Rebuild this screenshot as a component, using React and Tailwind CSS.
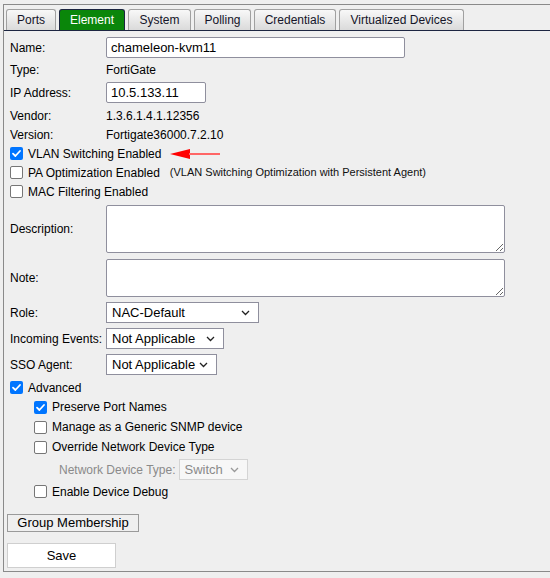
import React from "react";

const tabs = [
  { name: "Ports", w: "w-[50px]" },
  { name: "Element", w: "w-[66px]", active: true },
  { name: "System", w: "w-[63px]" },
  { name: "Polling", w: "w-[57px]" },
  { name: "Credentials", w: "w-[82px]" },
  { name: "Virtualized Devices", w: "w-[125px]" },
];

function Check({ checked }) {
  if (checked) {
    return (
      <span className="w-[13px] h-[13px] rounded-[2px] bg-[#0075ff] flex items-center justify-center shrink-0">
        <svg width="11" height="11" viewBox="0 0 11 11" fill="none">
          <path d="M2 5.6 L4.4 8 L9 3" stroke="white" strokeWidth="1.8" strokeLinecap="round" strokeLinejoin="round" />
        </svg>
      </span>
    );
  }
  return <span className="w-[13px] h-[13px] rounded-[2px] bg-white border border-[#767676] shrink-0" />;
}

function CheckRow({ checked, label, indent, h = "h-[19px]", children }) {
  return (
    <div className={`flex items-center ${h} ${indent ? "pl-[24px]" : ""}`}>
      <Check checked={checked} />
      <span className="ml-[5px]">{label}</span>
      {children}
    </div>
  );
}

function Chevron({ color = "#222" }) {
  return (
    <svg width="9" height="6" viewBox="0 0 9 6" fill="none">
      <path d="M1 1 L4.5 4.5 L8 1" stroke={color} strokeWidth="1.3" />
    </svg>
  );
}

function Select({ value, w, disabled }) {
  return (
    <div
      className={`${w} h-[21px] flex items-center justify-between pl-[5px] pr-[8px] text-[13px] border ${
        disabled ? "border-[#d4d4d4] text-[#8a8a8a] bg-[#f7f7f7] h-[20px]" : "border-[#8f8f9d] bg-white text-black"
      }`}
    >
      <span>{value}</span>
      <Chevron color={disabled ? "#999" : "#222"} />
    </div>
  );
}

function Field({ label, children, h = "h-[22px]", className = "" }) {
  return (
    <div className={`flex items-center ${h} ${className}`}>
      <span className="w-[96px] shrink-0">{label}</span>
      {children}
    </div>
  );
}

export default function App() {
  return (
    <div className="h-[578px] bg-[#efefef] pt-[4px] pl-[3px] overflow-hidden text-[12px] text-black" style={{ fontFamily: '"Liberation Sans", Arial, sans-serif' }}>
      <div className="h-[568px] border-t border-l border-b border-[#8a8a8a]">
        <div className="flex gap-[3px] pl-[2px] pt-[4px] border-b border-[#1c2541]">
          {tabs.map((t) => (
            <div
              key={t.name}
              className={`${t.w} h-[21px] flex items-center justify-center rounded-t-[3px] border border-b-0 ${
                t.active
                  ? "bg-[#0a860a] border-[#1c2541] text-white"
                  : "bg-gradient-to-b from-[#f8f8f8] to-[#dadada] border-[#a0a0a0] text-[#141428]"
              }`}
            >
              {t.name}
            </div>
          ))}
        </div>

        <div className="pl-[6px] pt-[5px]">
          <Field label="Name:" h="h-[23px]">
            <div className="w-[299px] h-[21px] bg-white border border-[#8f8f9d] rounded-[2px] flex items-center pl-[4px] text-[13px]">
              chameleon-kvm11
            </div>
          </Field>
          <Field label="Type:">
            <span>FortiGate</span>
          </Field>
          <Field label="IP Address:" h="h-[23px]">
            <div className="w-[100px] h-[21px] bg-white border border-[#8f8f9d] rounded-[2px] flex items-center pl-[4px] text-[13px]">
              10.5.133.11
            </div>
          </Field>
          <Field label="Vendor:" h="h-[20px]" className="mt-[2px]">
            <span>1.3.6.1.4.1.12356</span>
          </Field>
          <Field label="Version:" h="h-[18px]">
            <span>Fortigate36000.7.2.10</span>
          </Field>
          <CheckRow checked label="VLAN Switching Enabled">
            <svg className="ml-[9px]" width="52" height="12" viewBox="0 0 52 12">
              <polygon points="0,6 20,1 20,11" fill="#f00" />
              <line x1="19" y1="6" x2="50" y2="6" stroke="#f66" strokeWidth="2" />
            </svg>
          </CheckRow>
          <CheckRow label="PA Optimization Enabled">
            <span className="ml-[10px] text-[11px] text-[#111]">(VLAN Switching Optimization with Persistent Agent)</span>
          </CheckRow>
          <CheckRow label="MAC Filtering Enabled" />

          <div className="flex items-center mt-[4px]">
            <span className="w-[96px] shrink-0">Description:</span>
            <textarea className="w-[399px] h-[48px] bg-white border border-[#8f8f9d] rounded-[2px] block" />
          </div>
          <div className="flex items-center mt-[6px]">
            <span className="w-[96px] shrink-0">Note:</span>
            <textarea className="w-[399px] h-[38px] bg-white border border-[#8f8f9d] rounded-[2px] block" />
          </div>

          <div className="mt-[5px] flex items-center">
            <span className="w-[96px] shrink-0">Role:</span>
            <Select value="NAC-Default" w="w-[153px]" />
          </div>
          <div className="mt-[5px] flex items-center">
            <span className="w-[96px] shrink-0">Incoming Events:</span>
            <Select value="Not Applicable" w="w-[118px]" />
          </div>
          <div className="mt-[5px] flex items-center">
            <span className="w-[96px] shrink-0">SSO Agent:</span>
            <Select value="Not Applicable" w="w-[111px]" />
          </div>

          <div className="mt-[3px]">
            <CheckRow checked label="Advanced" />
            <CheckRow checked indent label="Preserve Port Names" h="h-[20px]" />
            <CheckRow indent label="Manage as a Generic SNMP device" h="h-[20px]" />
            <CheckRow indent label="Override Network Device Type" h="h-[20px]" />
            <div className="h-[25px] flex items-center pl-[49px]">
              <span className="text-[#8a8a8a] mr-[3px]">Network Device Type:</span>
              <Select value="Switch" w="w-[69px]" disabled />
            </div>
            <CheckRow indent label="Enable Device Debug" />
          </div>

          <div className="mt-[13px]">
            <button className="ml-[-3px] w-[132px] h-[18px] border border-[#9a9a9a] bg-[#efefef] text-[13px] flex items-center justify-center">
              Group Membership
            </button>
          </div>
          <div className="mt-[11px]">
            <button className="ml-[-3px] w-[109px] h-[25px] border border-[#cfcfcf] bg-white text-[13px] flex items-center justify-center">
              Save
            </button>
          </div>
        </div>
      </div>
    </div>
  );
}
